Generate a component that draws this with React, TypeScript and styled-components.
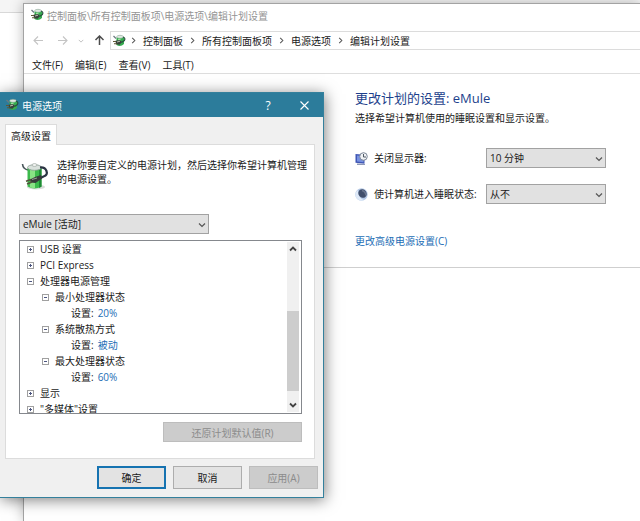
import React, { useState } from "react";
import styled, { createGlobalStyle, css } from "styled-components";

const GlobalStyle = createGlobalStyle`
  * { box-sizing: border-box; }
  body {
    margin: 0;
    background: #fff;
    overflow: hidden;
  }
  body, button, select {
    font-family: "Open Sans", "Noto Sans CJK SC", sans-serif;
    font-size: 10px;
    color: #1a1a1a;
  }
`;

const Desktop = styled.div`
  position: relative;
  min-height: 100vh;
  padding: 3px 0 0 23px;
  overflow: hidden;
  background: linear-gradient(#f5f5f5 12px, #d8d8d8 12px, #d8d8d8 13px, #fff 13px);
`;

const Window = styled.main`
  min-height: calc(100vh - 3px);
  background: #fff;
  border: 1px solid #a3a3a3;
  border-right: 0;
  border-bottom: 0;
  box-shadow: 0 0 12px rgba(0, 0, 0, 0.28);
`;

const WindowTitle = styled.header`
  display: flex;
  align-items: center;
  gap: 3px;
  height: 22px;
  padding-left: 6px;
  color: #949494;
`;

const NavBar = styled.nav`
  display: flex;
  align-items: center;
  margin-top: 5px;
  height: 19px;
  padding-left: 9px;
`;

const NavButton = styled.button<{ $gap: number }>`
  display: flex;
  padding: 0;
  border: 0;
  background: none;
  margin-right: ${(p) => p.$gap}px;
`;

const Address = styled.ol`
  flex: 1;
  display: flex;
  align-items: center;
  height: 19px;
  margin: 0;
  padding: 0 0 0 1px;
  list-style: none;
  border: 1px solid #dcdcdc;
  border-right: 0;
`;

const Crumb = styled.li`
  display: flex;
  align-items: center;
  svg { margin: 0 6px; }
  &:first-of-type svg { margin-left: 4px; }
`;

const CrumbLink = styled.a`
  color: inherit;
  text-decoration: none;
`;

const MenuBar = styled.div`
  display: flex;
  gap: 12px;
  height: 24px;
  padding-left: 8px;
  border-bottom: 1px solid #dedede;
`;

const MenuItem = styled.button`
  padding: 6px 0 0;
  border: 0;
  background: none;
  line-height: 14px;
`;

const PlanSection = styled.section`
  padding: 14px 34px 19px 331px;
  border-bottom: 1px solid #cfcfcf;
`;

const Heading = styled.h1`
  margin: 0;
  font-size: 13px;
  line-height: 20px;
  font-weight: 400;
  color: #1d3f8c;
`;

const Paragraph = styled.p`
  margin: 0;
  line-height: 14px;
`;

const PlanIntro = styled(Paragraph)`
  margin: 3px 0 23px;
`;

const PlanRow = styled.div`
  display: grid;
  grid-template-columns: 13px 106px minmax(0, 120px);
  column-gap: 6px;
  align-items: center;
  height: 20px;
  margin-bottom: 16px;
  svg { display: block; }
  label { white-space: nowrap; line-height: 14px; }
`;

const SelectFrame = styled.div`
  position: relative;
  svg {
    position: absolute;
    right: 3px;
    top: 7px;
    pointer-events: none;
  }
`;

const SelectBox = styled.select`
  display: block;
  width: 100%;
  height: 20px;
  padding: 0 16px 0 3px;
  border: 1px solid #a2a2a2;
  border-radius: 0;
  background: #e1e1e1;
  appearance: none;
`;

const Link = styled.a`
  color: #1c6db5;
  text-decoration: none;
  line-height: 14px;
`;

const AdvancedLink = styled(Link)`
  display: inline-block;
  margin-top: 14px;
`;

const Dialog = styled.section`
  position: absolute;
  top: 92px;
  left: 0;
  width: min(324px, 100%);
  background: #f0f0f0;
  border: 1px solid #34809c;
  border-left: 0;
  box-shadow: 1px 2px 14px rgba(0, 0, 0, 0.5);
`;

const DialogTitle = styled.header`
  display: flex;
  align-items: center;
  gap: 3px;
  height: 24px;
  padding: 0 13px 0 5px;
  color: #fff;
  background: #2c7c9b;
`;

const DialogName = styled.h2`
  flex: 1;
  margin: 0;
  font-size: 10px;
  font-weight: 400;
`;

const TitleButton = styled.button`
  display: grid;
  place-items: center;
  width: 12px;
  height: 20px;
  margin-left: 21px;
  padding: 0;
  border: 0;
  background: none;
  color: #fff;
  font-size: 12px;
`;

const DialogBody = styled.div`
  padding: 7px 5px 8px;
`;

const Tab = styled.button`
  display: block;
  position: relative;
  z-index: 1;
  height: 21px;
  margin-bottom: -1px;
  padding: 0 5px;
  border: 1px solid #dcdcdc;
  border-bottom: 0;
  background: #fff;
`;

const TabPanel = styled.div`
  margin-right: 3px;
  padding: 13px 12px 16px 13px;
  border: 1px solid #dcdcdc;
  background: #fff;
`;

const Intro = styled.div`
  display: flex;
  gap: 8px;
  min-height: 56px;
  margin-right: -8px;
  padding-left: 2px;
  svg { flex: none; margin-top: 4px; }
`;

const PlanPicker = styled.div`
  width: 67%;
`;

const TreeFrame = styled.div`
  display: flex;
  height: 174px;
  margin: 6px 0 8px;
  border: 1px solid #85888d;
  overflow: hidden;
`;

const Tree = styled.ul`
  flex: 1;
  margin: 0;
  padding: 0 0 0 7px;
  list-style: none;
`;

const TreeGroup = styled.ul`
  margin: 0;
  padding: 0 0 0 15px;
  list-style: none;
`;

const TreeRow = styled.div<{ $leaf?: boolean }>`
  display: flex;
  align-items: center;
  gap: 6px;
  height: 16px;
  line-height: 16px;
  white-space: nowrap;
  ${(p) =>
    p.$leaf &&
    css`
      padding-left: 14px;
      gap: 4px;
    `}
`;

const Toggle = styled.button`
  display: flex;
  padding: 0;
  border: 0;
  background: none;
`;

const ScrollBar = styled.div`
  display: grid;
  grid-template-rows: 14px 55px 80px 1fr;
  justify-items: center;
  width: 12px;
  margin: 1px 2px;
  background: #f0f0f0;
`;

const ScrollButton = styled.button<{ $last?: boolean }>`
  display: grid;
  place-items: center;
  padding: 0;
  border: 0;
  background: none;
  grid-row: ${(p) => (p.$last ? 4 : 1)};
  align-self: ${(p) => (p.$last ? "end" : "start")};
  height: 14px;
`;

const ScrollThumb = styled.div`
  grid-row: 3;
  width: 100%;
  background: #cdcdcd;
`;

const ButtonRow = styled.div`
  display: flex;
  justify-content: flex-end;
  gap: 7px;
`;

const PushButton = styled.button<{ $primary?: boolean; $wide?: boolean }>`
  width: ${(p) => (p.$wide ? 139 : 69)}px;
  height: ${(p) => (p.$wide ? 20 : 23)}px;
  padding: 0;
  border: ${(p) => (p.$primary ? "2px solid #1673b1" : "1px solid #adadad")};
  background: #e3e3e3;
  &:disabled {
    color: #8b8b8b;
    background: #cccccc;
    border-color: #bdbdbd;
  }
`;

const DialogButtons = styled(ButtonRow)`
  margin-top: 7px;
`;

function PowerIcon({ size }: { size: number }) {
  return (
    <svg width={size} height={size} viewBox="0 0 28 28" aria-hidden="true">
      <ellipse cx="15" cy="25" rx="9" ry="2.500" fill="#bfc4bf" opacity="0.6" />
      <path d="M1.500 2Q2 7 7 8" fill="none" stroke="#4a565b" strokeWidth="1.600" />
      <path d="M6.500 6v18.500q7 4 14 0V6z" fill="#3cba4c" />
      <path d="M9 8v17.500q2.500.8 5 .8V8z" fill="#9cec94" opacity="0.8" />
      <path d="M18 7v19l2.500-1.200V6z" fill="#1f8a35" />
      <ellipse cx="13.500" cy="5.500" rx="7" ry="2.800" fill="#d9e1dc" stroke="#8c9d94" strokeWidth="0.8" />
      <ellipse cx="13.500" cy="3" rx="2.500" ry="1.400" fill="#f5f7f5" stroke="#8c9891" strokeWidth="0.6" />
      <path d="M19 5.500q5-.5 6.500 3.500t-3 5.500l-4 2" fill="none" stroke="#2b3443" strokeWidth="2.200" />
      <path d="M20 13l1 3.500-6.500 4.500-5-.5-.5-3 5-2.500z" fill="#373a3b" />
      <path d="M10 17.500l-5 1.800M11 20l-5 2" stroke="#55503c" strokeWidth="1.500" />
      <path d="M11 17.500l5-1.500" stroke="#a1a79d" strokeWidth="0.9" />
    </svg>
  );
}

function SmallPowerIcon() {
  return (
    <svg width="14" height="14" viewBox="0 0 14 14" aria-hidden="true">
      <path d="M1.500 2l2.500 2.500" fill="none" stroke="#6c7a80" strokeWidth="1.200" />
      <path d="M4.500 3.500q4-3.500 7.500 0v6.500q-3.500 3.500-7.500 1z" fill="#36ac50" />
      <ellipse cx="8" cy="2.800" rx="3.300" ry="1.500" fill="#dfeae2" stroke="#7f9a8a" strokeWidth="0.5" />
      <path d="M6 5l2.500-.5v3L6 8z" fill="#9be39c" />
      <path d="M11 3q2.800 1 1.400 3.500L9.500 8.500" fill="none" stroke="#28503e" strokeWidth="1.200" />
      <path d="M3.500 6.800L8 6l2 2-2.500 2.800-3.500-.6z" fill="#38423c" />
      <path d="M4 7.500H1M5 9.800H2" stroke="#5f5836" strokeWidth="1.100" />
      <path d="M5 8l3-.8" stroke="#c7ccbb" strokeWidth="0.9" />
    </svg>
  );
}

function DisplayTimerIcon() {
  return (
    <svg width="13" height="13" viewBox="0 0 13 13" aria-hidden="true">
      <path d="M.5 2l9 .8v9L.5 10.800z" fill="#3f56b5" />
      <path d="M2 3.500l6.500.8v6L2 9.600z" fill="#7791e0" />
      <path d="M2 11.500l8 .5v1H2z" fill="#8f98b8" />
      <circle cx="8.500" cy="4.500" r="3.800" fill="#f0f2f5" stroke="#7c8797" />
      <path d="M8.500 2v3H11" fill="none" stroke="#4f5963" />
    </svg>
  );
}

function SleepIcon() {
  return (
    <svg width="13" height="13" viewBox="0 0 13 13" aria-hidden="true">
      <circle cx="6.500" cy="6.500" r="6.200" fill="#b4c8e6" />
      <path d="M1 4a6 6 0 0 0 8 8Q3 10 3 2z" fill="#dfeaf8" />
      <ellipse cx="7.500" cy="5.500" rx="4" ry="4.500" transform="rotate(-35 7.500 5.500)" fill="#414f6c" />
      <path d="M7 2.500q3.500 1 4 5" fill="none" stroke="#6c7891" strokeWidth="1.500" />
    </svg>
  );
}

function Arrow({ dir, color }: { dir: "left" | "right" | "up"; color: string }) {
  const turn = { left: 0, up: 90, right: 180 }[dir];
  return (
    <svg width="11" height="11" viewBox="0 0 11 11" aria-hidden="true">
      <path
        d="M10 5.500H1M5 1.500l-4 4 4 4"
        transform={`rotate(${turn} 5.500 5.500)`}
        fill="none"
        stroke={color}
        strokeWidth={dir === "up" ? 1.500 : 1.100}
      />
    </svg>
  );
}

function Chevron({ dir = "down", size = 8, color = "#555", weight = 1.200 }: { dir?: "down" | "up" | "right"; size?: number; color?: string; weight?: number }) {
  const turn = { down: 0, up: 180, right: -90 }[dir];
  return (
    <svg width={size} height={size} viewBox="0 0 8 8" aria-hidden="true">
      <path d="M1 2.500l3 3 3-3" transform={`rotate(${turn} 4 4)`} fill="none" stroke={color} strokeWidth={weight} />
    </svg>
  );
}

function Expander({ open }: { open: boolean }) {
  return (
    <svg width="7" height="7" viewBox="0 0 7 7" aria-hidden="true">
      <rect x="0.500" y="0.500" width="6" height="6" fill="#fff" stroke="#a0a0a0" />
      <path d={open ? "M2 3.500h3" : "M2 3.500h3M3.500 2v3"} stroke="#4c5680" />
    </svg>
  );
}

function Select({ id, label, options }: { id: string; label?: string; options: string[] }) {
  return (
    <SelectFrame>
      <SelectBox id={id} aria-label={label}>
        {options.map((o) => (
          <option key={o}>{o}</option>
        ))}
      </SelectBox>
      <Chevron />
    </SelectFrame>
  );
}

interface TreeNode {
  name: string;
  value?: string;
  children?: TreeNode[];
}

const settings: TreeNode[] = [
  { name: "USB 设置" },
  { name: "PCI Express" },
  {
    name: "处理器电源管理",
    children: [
      { name: "最小处理器状态", value: "20%" },
      { name: "系统散热方式", value: "被动" },
      { name: "最大处理器状态", value: "60%" },
    ],
  },
  { name: "显示" },
  { name: "\"多媒体\"设置" },
];

function TreeItem({ node }: { node: TreeNode }) {
  const [open, setOpen] = useState(Boolean(node.children || node.value));
  return (
    <li>
      <TreeRow>
        <Toggle aria-label={node.name} aria-expanded={open} onClick={() => setOpen(!open)}>
          <Expander open={open} />
        </Toggle>
        {node.name}
      </TreeRow>
      {open && node.children && (
        <TreeGroup>
          {node.children.map((c) => (
            <TreeItem key={c.name} node={c} />
          ))}
        </TreeGroup>
      )}
      {open && node.value && (
        <TreeGroup>
          <li>
            <TreeRow $leaf>
              设置: <Link href="#value">{node.value}</Link>
            </TreeRow>
          </li>
        </TreeGroup>
      )}
    </li>
  );
}

const crumbs = ["控制面板", "所有控制面板项", "电源选项", "编辑计划设置"];
const menus = ["文件(F)", "编辑(E)", "查看(V)", "工具(T)"];

export default function App() {
  return (
    <Desktop>
      <GlobalStyle />
      <Window>
        <WindowTitle>
          <SmallPowerIcon />
          {crumbs.join("\\")}
        </WindowTitle>
        <NavBar>
          <NavButton $gap={13} aria-label="后退"><Arrow dir="left" color="#c4c4c4" /></NavButton>
          <NavButton $gap={10} aria-label="前进"><Arrow dir="right" color="#c4c4c4" /></NavButton>
          <NavButton $gap={10} aria-label="最近"><Chevron size={6} color="#bbb" /></NavButton>
          <NavButton $gap={5} aria-label="向上"><Arrow dir="up" color="#4d4d4d" /></NavButton>
          <Address>
            <SmallPowerIcon />
            {crumbs.map((c) => (
              <Crumb key={c}>
                <Chevron dir="right" size={7} />
                <CrumbLink href="#crumb">{c}</CrumbLink>
              </Crumb>
            ))}
          </Address>
        </NavBar>
        <MenuBar>
          {menus.map((m) => (
            <MenuItem key={m}>{m}</MenuItem>
          ))}
        </MenuBar>
        <PlanSection>
          <Heading>更改计划的设置: eMule</Heading>
          <PlanIntro>选择希望计算机使用的睡眠设置和显示设置。</PlanIntro>
          <PlanRow>
            <DisplayTimerIcon />
            <label htmlFor="display-off">关闭显示器:</label>
            <Select id="display-off" options={["10 分钟", "从不"]} />
          </PlanRow>
          <PlanRow>
            <SleepIcon />
            <label htmlFor="sleep">使计算机进入睡眠状态:</label>
            <Select id="sleep" options={["从不", "10 分钟"]} />
          </PlanRow>
          <AdvancedLink href="#advanced">更改高级电源设置(C)</AdvancedLink>
        </PlanSection>
      </Window>

      <Dialog role="dialog" aria-labelledby="dialog-name">
        <DialogTitle>
          <SmallPowerIcon />
          <DialogName id="dialog-name">电源选项</DialogName>
          <TitleButton aria-label="帮助">?</TitleButton>
          <TitleButton aria-label="关闭">
            <svg width="9" height="9" viewBox="0 0 9 9" aria-hidden="true">
              <path d="M.5.5l8 8M8.500.5l-8 8" stroke="#fff" strokeWidth="1.100" />
            </svg>
          </TitleButton>
        </DialogTitle>
        <DialogBody>
          <Tab role="tab" aria-selected="true">高级设置</Tab>
          <TabPanel role="tabpanel">
            <Intro>
              <PowerIcon size={28} />
              <Paragraph>选择你要自定义的电源计划，然后选择你希望计算机管理的电源设置。</Paragraph>
            </Intro>
            <PlanPicker>
              <Select id="plan" label="电源计划" options={["eMule [活动]"]} />
            </PlanPicker>
            <TreeFrame>
              <Tree>
                {settings.map((n) => (
                  <TreeItem key={n.name} node={n} />
                ))}
              </Tree>
              <ScrollBar>
                <ScrollButton aria-label="向上滚动"><Chevron dir="up" color="#444" weight={1.800} /></ScrollButton>
                <ScrollThumb />
                <ScrollButton $last aria-label="向下滚动"><Chevron color="#444" weight={1.800} /></ScrollButton>
              </ScrollBar>
            </TreeFrame>
            <ButtonRow>
              <PushButton $wide disabled>还原计划默认值(R)</PushButton>
            </ButtonRow>
          </TabPanel>
          <DialogButtons>
            <PushButton $primary>确定</PushButton>
            <PushButton>取消</PushButton>
            <PushButton disabled>应用(A)</PushButton>
          </DialogButtons>
        </DialogBody>
      </Dialog>
    </Desktop>
  );
}
